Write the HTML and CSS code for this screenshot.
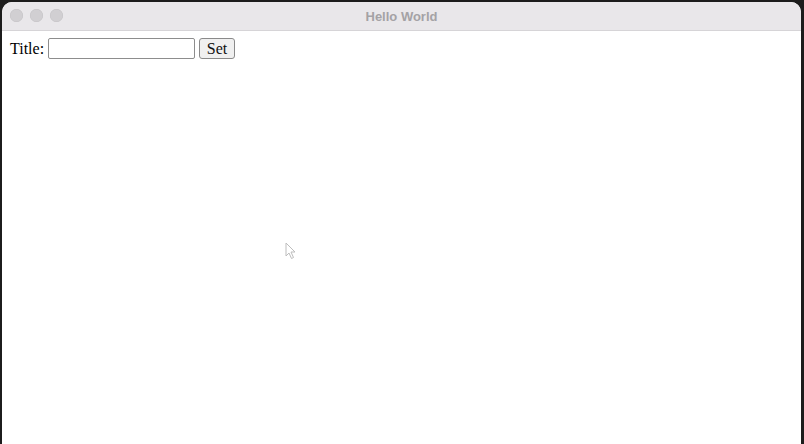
FILE: index.html
```html
<!DOCTYPE html>
<html>
<head>
<meta charset="utf-8">
<link rel="stylesheet" href="styles.css">
</head>
<body>
<div class="window">
  <div class="titlebar">
    <div class="lights">
      <span class="light"></span>
      <span class="light"></span>
      <span class="light"></span>
    </div>
    <div class="title">Hello World</div>
  </div>
  <div class="content">
    <label class="row">Title: <input class="field" type="text"> <button class="btn">Set</button></label>
    <svg class="cursor" width="12" height="18" viewBox="0 0 12 18"><path d="M1 1 L1 14 L4 11 L6.5 16.5 L8.5 15.5 L6 10 L10 10 Z" fill="#fff" stroke="#bdbdbd" stroke-width="1"/></svg>
  </div>
</div>
</body>
</html>
```
FILE: styles.css
```css
html, body {
  margin: 0;
  padding: 0;
  width: 804px;
  height: 444px;
  overflow: hidden;
  background: #1c1c1c;
}
.window {
  margin: 2px 3px 0 2px;
  height: 442px;
  background: #ffffff;
  border-radius: 10px 10px 0 0;
  overflow: hidden;
  display: flex;
  flex-direction: column;
}
.titlebar {
  height: 28px;
  background: #e9e7ea;
  border-bottom: 1px solid #d6d4d7;
  position: relative;
  display: flex;
  align-items: center;
  justify-content: center;
  flex-shrink: 0;
}
.lights {
  position: absolute;
  left: 8px;
  top: 7px;
  display: flex;
  gap: 7px;
}
.light {
  width: 13px;
  height: 13px;
  border-radius: 50%;
  background: #d1cfd2;
  box-shadow: inset 0 0 0 0.5px #c4c2c5;
}
.title {
  font-family: "Liberation Sans", Arial, sans-serif;
  font-weight: bold;
  font-size: 13px;
  color: #a4a2a5;
}
.content {
  flex: 1;
  position: relative;
  padding: 7px 8px;
  font-family: "Liberation Serif", "Times New Roman", serif;
  font-size: 16px;
  color: #000;
}
.row {
  display: flex;
  align-items: center;
  gap: 4px;
  height: 21px;
}
.field {
  box-sizing: border-box;
  width: 147px;
  height: 21px;
  border: 1px solid #8d8d8d;
  border-radius: 2px;
  background: #fff;
  padding: 0 4px;
  margin: 0;
  font-family: "Liberation Serif", serif;
  font-size: 14px;
}
.btn {
  box-sizing: border-box;
  width: 36px;
  height: 21px;
  margin: 0;
  padding: 0;
  border: 1px solid #8a8a8a;
  border-radius: 3px;
  background: #f0f0f0;
  font-family: "Liberation Serif", "Times New Roman", serif;
  font-size: 16px;
  color: #111;
}
.cursor {
  position: absolute;
  left: 283px;
  top: 211px;
}
```
